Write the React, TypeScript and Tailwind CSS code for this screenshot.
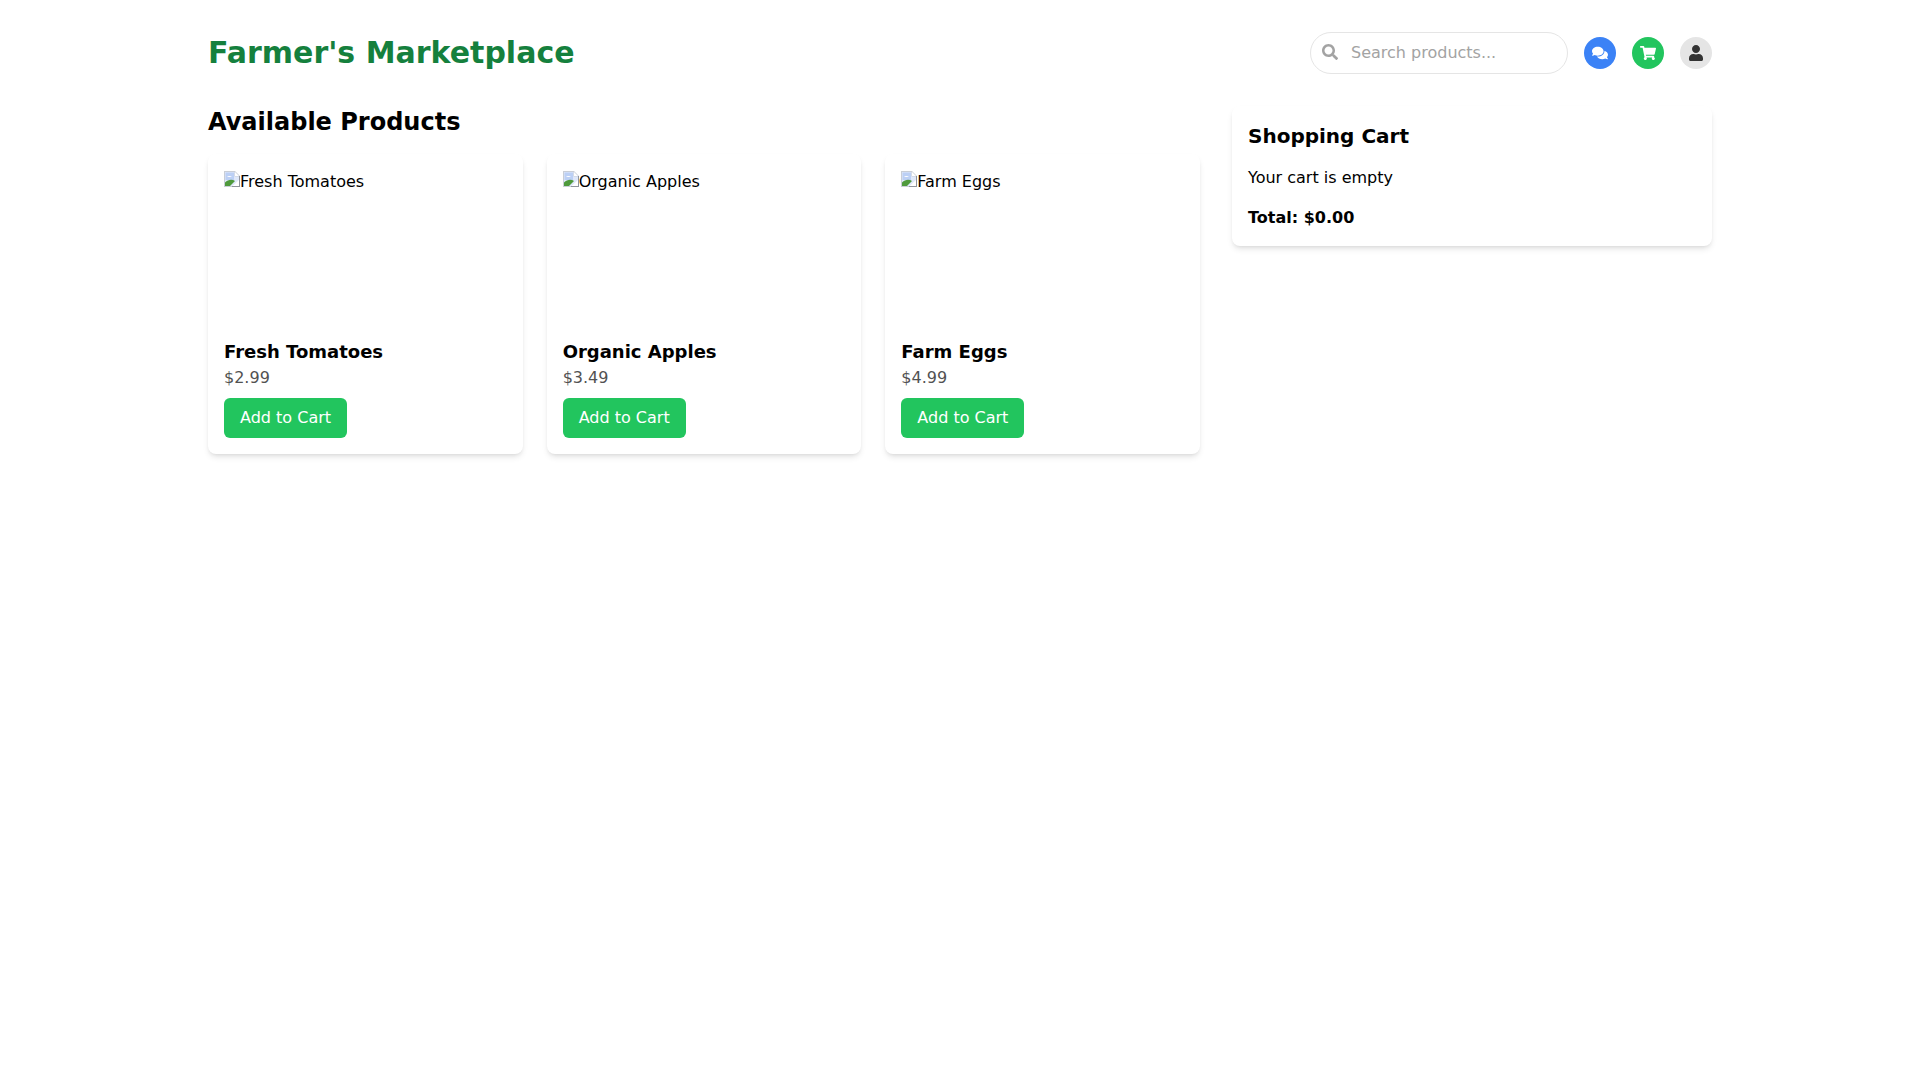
import { FaSearch, FaComments, FaShoppingCart, FaUser } from "react-icons/fa";

function BrokenImage() {
  return (
    <svg width="16" height="16" viewBox="0 0 16 16" className="mt-[1px] shrink-0">
      <path d="M0 0H11L16 5V16H0Z" fill="#c9ced6" />
      <path d="M15 5H16V16H8V15H15Z" fill="#8f949c" />
      <path d="M1 1H10.5V5.5H15V15H1Z" fill="#dfe8fa" />
      <path d="M11 1L15 5H11Z" fill="#ffffff" />
      <path d="M1.5 1.5H10V9H1.5Z" fill="#bcd0f5" />
      <path d="M3 6C4 4.5 6.5 4.5 8 6Z" fill="#ffffff" />
      <path d="M1 15V11.5C4 8.5 8 8 11 10L6 15Z" fill="#4f9a3c" />
      <path d="M8.5 15L15 9V15Z" fill="#ffffff" />
    </svg>
  );
}

const products = [
  { name: "Fresh Tomatoes", price: "$2.99" },
  { name: "Organic Apples", price: "$3.49" },
  { name: "Farm Eggs", price: "$4.99" },
];

export default function App() {
  return (
    <div className="min-h-screen bg-white text-black font-['DejaVu_Sans',sans-serif]">
      <div className="mx-auto max-w-[1536px] px-4">
        <header className="flex items-center justify-between pt-8 pb-8">
          <h1 className="text-3xl font-bold text-[#15803d]">Farmer's Marketplace</h1>
          <div className="flex items-center gap-4">
            <div className="relative">
              <FaSearch className="absolute left-3 top-[12px] text-[#a3a3a3]" size={16} />
              <input
                placeholder="Search products..."
                className="w-[258px] rounded-full border border-[#e5e5e5] py-2 pl-10 pr-4 text-base outline-none placeholder:text-[#a3a3a3]"
              />
            </div>
            <div className="flex h-8 w-8 items-center justify-center rounded-full bg-[#3b82f6] text-white">
              <FaComments size={16} />
            </div>
            <div className="flex h-8 w-8 items-center justify-center rounded-full bg-[#22c55e] text-white">
              <FaShoppingCart size={16} />
            </div>
            <div className="flex h-8 w-8 items-center justify-center rounded-full bg-[#e5e5e5] text-[#333333]">
              <FaUser size={16} />
            </div>
          </div>
        </header>
        <main className="grid grid-cols-3 gap-8">
          <section className="col-span-2">
            <h2 className="mb-4 text-2xl font-bold">Available Products</h2>
            <div className="grid grid-cols-3 gap-6">
              {products.map((p) => (
                <div key={p.name} className="rounded-lg bg-white p-4 shadow-md">
                  <div className="mb-2 flex h-40 items-start">
                    <BrokenImage />
                    <span>{p.name}</span>
                  </div>
                  <h3 className="text-lg font-bold">{p.name}</h3>
                  <p className="text-[#525252]">{p.price}</p>
                  <button className="mt-2 rounded-md bg-[#22c55e] px-4 py-2 text-white">Add to Cart</button>
                </div>
              ))}
            </div>
          </section>
          <aside className="self-start rounded-lg bg-white p-4 shadow-md">
            <h2 className="mb-4 text-xl font-bold">Shopping Cart</h2>
            <p>Your cart is empty</p>
            <p className="mt-4 font-bold">Total: $0.00</p>
          </aside>
        </main>
      </div>
    </div>
  );
}
